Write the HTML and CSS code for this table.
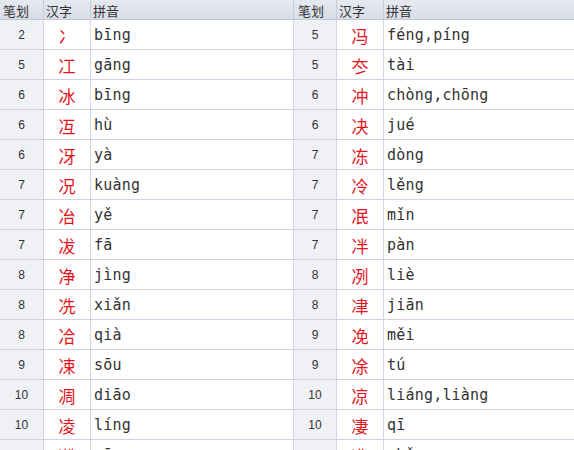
FILE: index.html
```html
<!DOCTYPE html>
<html lang="zh">
<head>
<meta charset="utf-8">
<link rel="stylesheet" href="styles.css">
</head>
<body>
<div class="grid">
  <div class="row head">
    <div class="h">笔划</div><div class="h">汉字</div><div class="h">拼音</div>
    <div class="h">笔划</div><div class="h">汉字</div><div class="h">拼音</div>
  </div>
  <div class="row"><div class="n">2</div><div class="c">冫</div><div class="p">bīng</div><div class="n">5</div><div class="c">冯</div><div class="p">féng,píng</div></div>
  <div class="row"><div class="n">5</div><div class="c">冮</div><div class="p">gāng</div><div class="n">5</div><div class="c">冭</div><div class="p">tài</div></div>
  <div class="row"><div class="n">6</div><div class="c">冰</div><div class="p">bīng</div><div class="n">6</div><div class="c">冲</div><div class="p">chòng,chōng</div></div>
  <div class="row"><div class="n">6</div><div class="c">冱</div><div class="p">hù</div><div class="n">6</div><div class="c">决</div><div class="p">jué</div></div>
  <div class="row"><div class="n">6</div><div class="c">冴</div><div class="p">yà</div><div class="n">7</div><div class="c">冻</div><div class="p">dòng</div></div>
  <div class="row"><div class="n">7</div><div class="c">况</div><div class="p">kuàng</div><div class="n">7</div><div class="c">冷</div><div class="p">lěng</div></div>
  <div class="row"><div class="n">7</div><div class="c">冶</div><div class="p">yě</div><div class="n">7</div><div class="c">冺</div><div class="p">mǐn</div></div>
  <div class="row"><div class="n">7</div><div class="c">冹</div><div class="p">fā</div><div class="n">7</div><div class="c">冸</div><div class="p">pàn</div></div>
  <div class="row"><div class="n">8</div><div class="c">净</div><div class="p">jìng</div><div class="n">8</div><div class="c">冽</div><div class="p">liè</div></div>
  <div class="row"><div class="n">8</div><div class="c">冼</div><div class="p">xiǎn</div><div class="n">8</div><div class="c">冿</div><div class="p">jiān</div></div>
  <div class="row"><div class="n">8</div><div class="c">冾</div><div class="p">qià</div><div class="n">9</div><div class="c">凂</div><div class="p">měi</div></div>
  <div class="row"><div class="n">9</div><div class="c">凁</div><div class="p">sōu</div><div class="n">9</div><div class="c">凃</div><div class="p">tú</div></div>
  <div class="row"><div class="n">10</div><div class="c">凋</div><div class="p">diāo</div><div class="n">10</div><div class="c">凉</div><div class="p">liáng,liàng</div></div>
  <div class="row"><div class="n">10</div><div class="c">凌</div><div class="p">líng</div><div class="n">10</div><div class="c">凄</div><div class="p">qī</div></div>
  <div class="row"><div class="n">10</div><div class="c">凇</div><div class="p">sōng</div><div class="n">10</div><div class="c">准</div><div class="p">zhǔn</div></div>
</div>
</body>
</html>
```
FILE: styles.css
```css
html, body {
  margin: 0;
  padding: 0;
  background: #ffffff;
  overflow: hidden;
}

.grid {
  display: flex;
  flex-direction: column;
  width: 574px;
}

.row {
  display: grid;
  grid-template-columns: 44px 47px 203px 43px 47px 1fr;
  height: 30px;
  box-sizing: border-box;
  border-bottom: 1px solid #cfd2e2;
}

.row > div {
  box-sizing: border-box;
  border-right: 1px solid #d3d6e6;
  display: flex;
  align-items: center;
  overflow: hidden;
  white-space: nowrap;
}

.row > div:last-child {
  border-right: none;
}

.head {
  height: 20px;
  background: linear-gradient(#e6e9f0, #d9dde7);
  border-bottom: 1px solid #c3c7d3;
}

.head > .h {
  border-right: 1px solid #c9cdd9;
  font-family: "Noto Sans CJK SC", sans-serif;
  font-size: 13px;
  color: #333333;
  padding-left: 2px;
  padding-top: 1px;
}

.head > .h:first-child {
  padding-left: 3px;
}

.head > .h:nth-child(4) {
  padding-left: 4px;
}

.n {
  background: #f0f1f5;
  justify-content: center;
  font-family: "Liberation Sans", sans-serif;
  font-size: 12px;
  color: #333333;
  padding-top: 1px;
}

.c {
  justify-content: center;
  font-family: "Noto Sans CJK SC", sans-serif;
  font-size: 17px;
  color: #e5141c;
  padding-top: 2px;
}

.p {
  padding-left: 3px;
  padding-top: 1px;
  font-family: "DejaVu Sans Mono", monospace;
  font-size: 15px;
  letter-spacing: 0.2px;
  color: #333333;
}
```
